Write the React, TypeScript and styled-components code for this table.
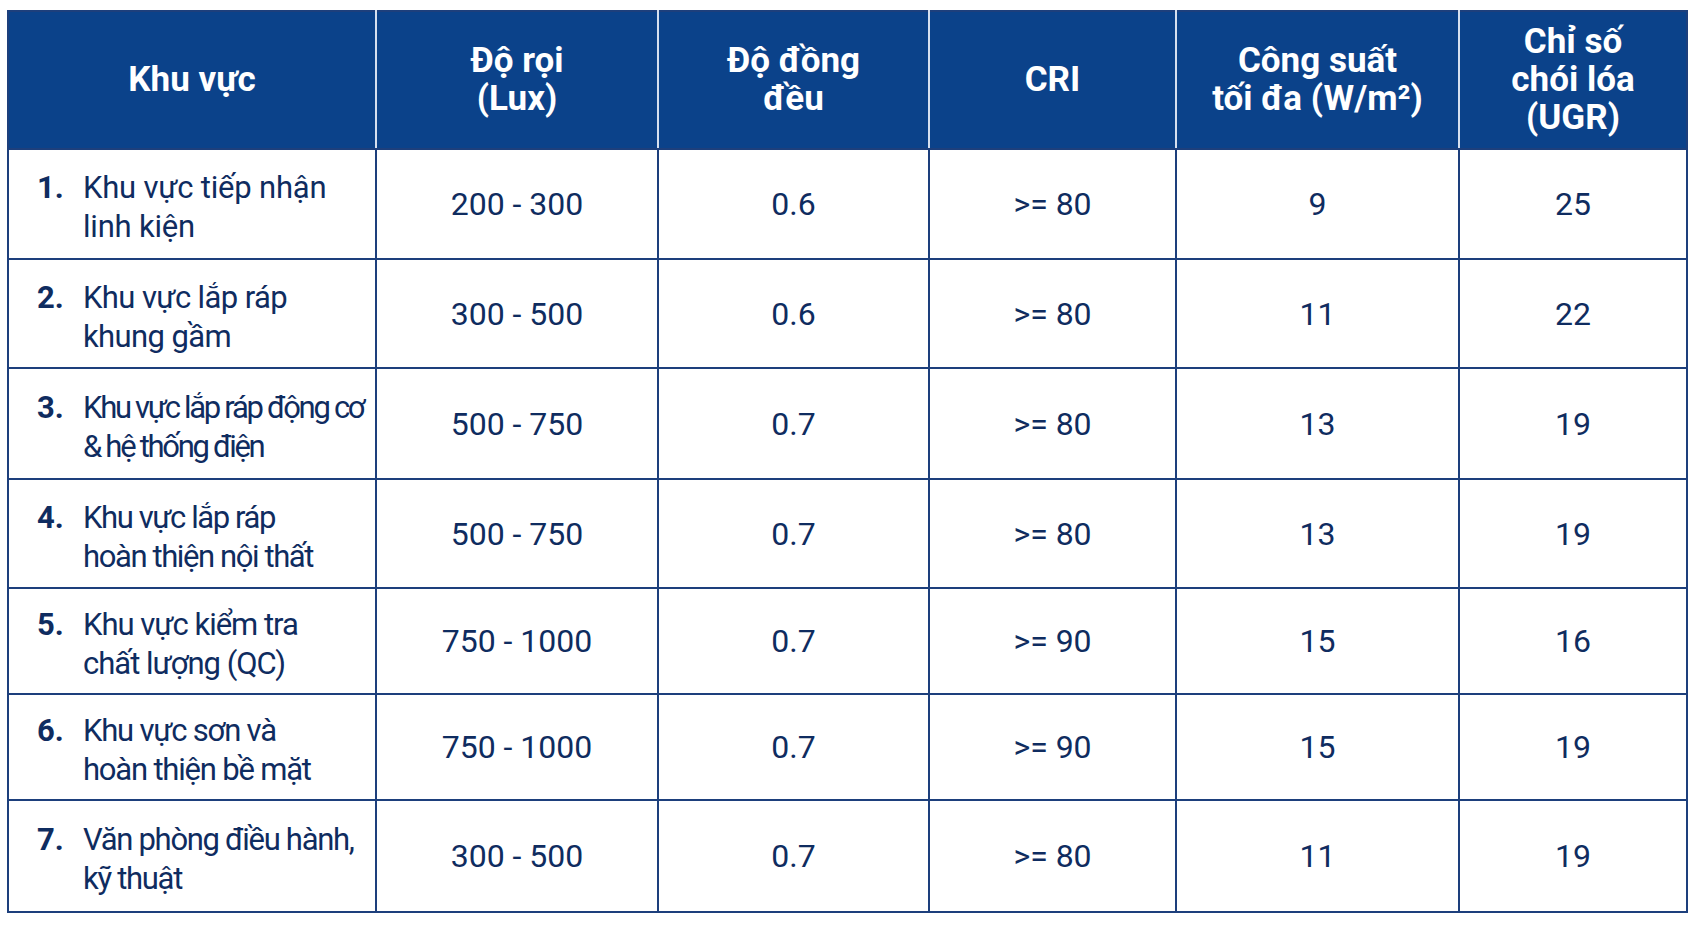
import React from 'react';
import styled, { createGlobalStyle } from 'styled-components';

const GlobalStyle = createGlobalStyle`
  html, body {
    margin: 0;
    padding: 0;
    background: #ffffff;
  }
`;

const columns = [
  { key: 'area', lines: ['Khu vực'], width: 368 },
  { key: 'lux', lines: ['Độ rọi', '(Lux)'], width: 282 },
  { key: 'uniform', lines: ['Độ đồng', 'đều'], width: 271 },
  { key: 'cri', lines: ['CRI'], width: 247 },
  { key: 'power', lines: ['Công suất', 'tối đa (W/m²)'], width: 283 },
  { key: 'ugr', lines: ['Chỉ số', 'chói lóa', '(UGR)'], width: 228 },
];

// tight: the long labels are squeezed a little so they stay inside the first column
const rows = [
  { no: '1.', area: ['Khu vực tiếp nhận', 'linh kiện'], lux: '200 - 300', uniform: '0.6', cri: '>= 80', power: '9', ugr: '25', h: 110, tight: 0.2 },
  { no: '2.', area: ['Khu vực lắp ráp', 'khung gầm'], lux: '300 - 500', uniform: '0.6', cri: '>= 80', power: '11', ugr: '22', h: 109, tight: 0.6 },
  { no: '3.', area: ['Khu vực lắp ráp động cơ', '& hệ thống điện'], lux: '500 - 750', uniform: '0.7', cri: '>= 80', power: '13', ugr: '19', h: 111, tight: 2.3 },
  { no: '4.', area: ['Khu vực lắp ráp', 'hoàn thiện nội thất'], lux: '500 - 750', uniform: '0.7', cri: '>= 80', power: '13', ugr: '19', h: 109, tight: 1.4 },
  { no: '5.', area: ['Khu vực kiểm tra', 'chất lượng (QC)'], lux: '750 - 1000', uniform: '0.7', cri: '>= 90', power: '15', ugr: '16', h: 106, tight: 1 },
  { no: '6.', area: ['Khu vực sơn và', 'hoàn thiện bề mặt'], lux: '750 - 1000', uniform: '0.7', cri: '>= 90', power: '15', ugr: '19', h: 106, tight: 1.2 },
  { no: '7.', area: ['Văn phòng điều hành,', 'kỹ thuật'], lux: '300 - 500', uniform: '0.7', cri: '>= 80', power: '11', ugr: '19', h: 112, tight: 1.3 },
];

const App: React.FC = () => {
  return (
    <Page>
      <GlobalStyle />
      <Table>
        <colgroup>
          {columns.map((col) => (
            <col key={col.key} style={{ width: col.width }} />
          ))}
        </colgroup>
        <thead>
          <tr>
            {columns.map((col) => (
              <HeadCell key={col.key}>
                {col.lines.map((line, i) => (
                  <div key={i}>{line}</div>
                ))}
              </HeadCell>
            ))}
          </tr>
        </thead>
        <tbody>
          {rows.map((row) => (
            <Row key={row.no} $height={row.h}>
              <AreaCell>
                <AreaWrap>
                  <Num>{row.no}</Num>
                  <AreaText $tight={row.tight}>
                    {row.area.map((line, i) => (
                      <div key={i}>{line}</div>
                    ))}
                  </AreaText>
                </AreaWrap>
              </AreaCell>
              <ValueCell>{row.lux}</ValueCell>
              <ValueCell>{row.uniform}</ValueCell>
              <ValueCell>{row.cri}</ValueCell>
              <ValueCell>{row.power}</ValueCell>
              <ValueCell>{row.ugr}</ValueCell>
            </Row>
          ))}
        </tbody>
      </Table>
    </Page>
  );
};

const Page = styled.div`
  padding: 10px 8px 0 7px;
  font-family: Roboto, 'Noto Sans', sans-serif;
  color: #0f2c60;
`;

const Table = styled.table`
  width: 1679px;
  table-layout: fixed;
  border-collapse: collapse;
  border: 2px solid #1d3f7c;
`;

const HeadCell = styled.th`
  height: 136px;
  padding: 0;
  background: #0b428a;
  color: #ffffff;
  font-size: 35px;
  font-weight: 700;
  line-height: 38px;
  text-align: center;
  vertical-align: middle;
  border-left: 2px solid #d6e0ef;
  border-bottom: 2px solid #1d3f7c;

  &:first-child {
    border-left: none;
  }
`;

const Row = styled.tr<{ $height: number }>`
  height: ${(p) => p.$height}px;
`;

const AreaCell = styled.td`
  padding: 0 0 0 28px;
  border: 2px solid #1d3f7c;
  vertical-align: middle;
`;

const AreaWrap = styled.div`
  display: flex;
  align-items: flex-start;
  padding-top: 6px;
`;

const Num = styled.span`
  width: 46px;
  flex-shrink: 0;
  font-size: 31px;
  font-weight: 700;
  line-height: 39px;
`;

const AreaText = styled.div<{ $tight: number }>`
  font-size: 31px;
  line-height: 39px;
  letter-spacing: ${(p) => -p.$tight}px;
  white-space: nowrap;
`;

const ValueCell = styled.td`
  padding: 0;
  border: 2px solid #1d3f7c;
  font-size: 32px;
  text-align: center;
  vertical-align: middle;
`;

export default App;
